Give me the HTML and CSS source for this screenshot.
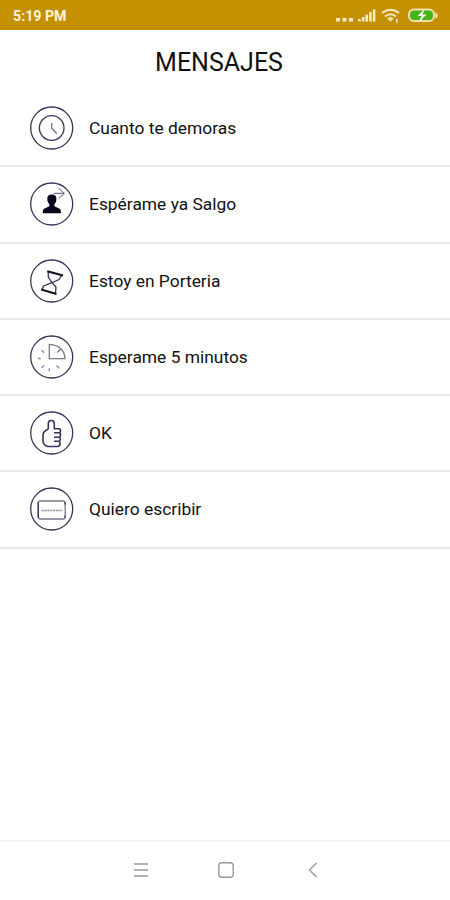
FILE: index.html
```html
<!DOCTYPE html>
<html lang="es">
  <head>
    <meta charset="utf-8" />
    <meta name="viewport" content="width=device-width, initial-scale=1.0" />
    <title>Mensajes</title>
    <link rel="stylesheet" href="styles.css">
  </head>
  <body>
    <header class="status-bar">
      <span class="time">5:19 PM</span>
      <svg class="status-icons" width="104" height="20" viewBox="0 0 104 20">
        <path class="solid" d="M0 12h4v3.500H0zM6.500 12h4v3.500h-4zM13 12h4v3.500h-4z" />
        <path class="solid" d="M22 13h2.600v2.500H22zM25.800 11h2.600v4.500h-2.600zM29.400 8.500H32v7h-2.600zM33.100 6h2.600v9.500h-2.600zM36.800 3.500h2.600v12h-2.600z" />
        <path class="line" d="M46 7Q54.500 .5 63 7M49 10.500Q54.500 6 60 10.500M52 13.300Q54.500 11.300 57 13.300" />
        <path class="solid" d="M52.800 13.500h3.400l-1.700 2.500zM60 13h1.500v4H60z" />
        <rect class="battery" x="73" y="3.500" width="25" height="11.500" rx="5" />
        <path class="solid" d="M99.500 6.500q2 0 2 3t-2 3z" />
        <path class="bolt" d="M88.500 3L81.500 10h4L83 16l7.500-7.500h-4z" />
      </svg>
    </header>

    <main>
      <h1>MENSAJES</h1>
      <ul class="messages">
        <li>
          <svg class="icon" viewBox="0 0 44 44">
            <circle cx="21.700" cy="22" r="21" />
            <circle cx="21.700" cy="22" r="12.300" />
            <path class="gray" d="M21.700 17v5l5 5.700" />
          </svg>
          <span>Cuanto te demoras</span>
        </li>
        <li>
          <svg class="icon" viewBox="0 0 44 44">
            <circle cx="21.700" cy="22" r="21" />
            <path class="fill" d="M21.800 12.500c3.400 0 4.700 1.500 4.600 4.500 0 2.500-.8 4-2 5v2.200l4.800 2.300q1.800.8 1.800 4.800H12.700q0-4 1.800-4.800l4.800-2.300V22c-1.200-1-2-2.500-2-5-.1-3 1.200-4.500 4.500-4.500z" />
            <path class="arrow" d="M23.500 11.300h10.800M28.500 6l5.800 5.300-5.800 5.500" />
          </svg>
          <span>Espérame ya Salgo</span>
        </li>
        <li>
          <svg class="icon" viewBox="0 0 44 44">
            <circle cx="21.700" cy="22" r="21" />
            <path d="M18.300 12.500v5.500l3.700 5.700-8.500 3.300-1.500 4M31.800 16.500l-2.800 4-7 3.200 4 4.300-.5 6" />
            <path class="thick" d="M17.300 12.200l15.700 4.300M11.200 30.500l15.300 4.500" />
          </svg>
          <span>Estoy en Porteria</span>
        </li>
        <li>
          <svg class="icon" viewBox="0 0 44 44">
            <circle cx="21.700" cy="22" r="21" />
            <path class="gray" d="M19.300 9.300v14.400H35Q34.500 10.500 19.300 9.300zM27.300 17.500l3-3.200" />
            <path class="tick" d="M11.500 15.300l2.700 2.500M7.800 23.500h3M11.500 32.700l2.700-2.300M19.200 33.200v3.300M26.500 30.500l2.700 2.800" />
          </svg>
          <span>Esperame 5 minutos</span>
        </li>
        <li>
          <svg class="icon" viewBox="0 0 44 44">
            <circle cx="21.700" cy="22" r="21" />
            <path class="hand" d="M18.300 18v-5.500q0-3 3-3t3 3v5.300H29q1.500 0 1.500 2t-1.500 2h-5M29 21.800q1.500 0 1.500 2.200T29 26.200h-5M29 26.200q1.300 0 1.300 2t-1.300 2h-5M28.500 30.200q1.500 0 1.500 2.500T27.500 35.500h-10q-4.500-2-4.500-5.500v-6q0-3.500 5.300-6" />
          </svg>
          <span>OK</span>
        </li>
        <li>
          <svg class="icon" viewBox="0 0 44 44">
            <circle cx="21.700" cy="22" r="21" />
            <rect class="gray" x="8.200" y="14" width="27" height="18" rx="2" />
            <path d="M8.300 15.500v15M35 15.500v2M35 28.500v2" />
            <path class="dots" d="M11.700 23.500h20.600" />
          </svg>
          <span>Quiero escribir</span>
        </li>
      </ul>
    </main>

    <nav class="nav-bar">
      <svg width="16" height="18" viewBox="0 0 16 18">
        <path d="M1 3h14M1 9h14M1 15h14" />
      </svg>
      <svg width="18" height="18" viewBox="0 0 18 18">
        <rect x="1.800" y="1.800" width="14.400" height="14.400" rx="3" />
      </svg>
      <svg width="10" height="18" viewBox="0 0 10 18">
        <path d="M8.500 2L1.500 9l7 7" />
      </svg>
    </nav>
  </body>
</html>
```

FILE: styles.css
```css
* {
  box-sizing: border-box;
}

body {
  display: flex;
  flex-direction: column;
  height: 100vh;
  margin: 0;
  font-family: Roboto, sans-serif;
  color: #111;
  background-color: #fff;
}

.status-bar {
  display: flex;
  justify-content: space-between;
  height: 30px;
  padding: 6px 10px 0 13px;
  background-color: #c49102;
}

.time {
  font-size: 14.2px;
  font-weight: 700;
  line-height: 20px;
  color: #fdf3dc;
}

.status-icons {
  fill: none;
}

.status-icons .solid {
  fill: #f8e8c4;
}

.status-icons .line {
  stroke: #f8e8c4;
  stroke-width: 2;
}

.status-icons .battery {
  fill: #45b514;
  stroke: #f3dfad;
  stroke-width: 2;
}

.status-icons .bolt {
  fill: #fff;
}

main {
  flex: 1;
}

h1 {
  height: 61px;
  margin: 0;
  padding-right: 12px;
  font-size: 25px;
  font-weight: 400;
  line-height: 65px;
  text-align: center;
}

.messages {
  margin: 0;
  padding: 0;
  list-style: none;
}

.messages li {
  display: flex;
  align-items: center;
  gap: 15px;
  height: 76.25px;
  padding-left: 30px;
  border-bottom: 2px solid #e8e8e8;
  font-size: 17.4px;
}

.icon {
  width: 44px;
  height: 44px;
  fill: none;
  stroke: #34345a;
  stroke-width: 1.3;
}

.icon .fill {
  fill: #08081c;
  stroke: none;
}

.icon .hand {
  stroke-width: 1.6;
}

.icon .gray {
  stroke: #77778c;
}

.icon .arrow {
  stroke: #55556c;
  stroke-width: 1;
}

.icon .thick {
  stroke: #111122;
  stroke-width: 2;
}

.icon .tick {
  stroke: #8a8a9c;
}

.icon .dots {
  stroke: #888894;
  stroke-dasharray: 2 0.8;
}

.nav-bar {
  display: flex;
  align-items: center;
  gap: 68px;
  height: 60px;
  padding: 0 0 2px 133px;
  border-top: 2px solid #f5f5f5;
  fill: none;
  stroke: #999;
  stroke-width: 1.4;
}

.nav-bar svg:last-child {
  margin-left: 5px;
}
```
